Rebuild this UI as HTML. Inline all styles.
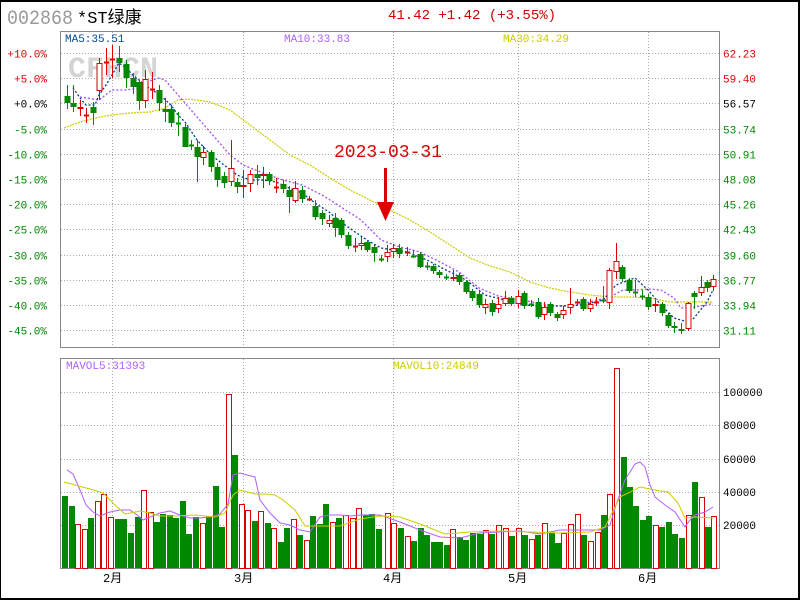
<!DOCTYPE html>
<html><head><meta charset="utf-8">
<style>
html,body{margin:0;padding:0;background:#fff}
#w{position:relative;width:800px;height:600px;box-sizing:border-box;border:2px solid #000;border-left-width:1px;overflow:hidden}
svg{position:absolute;left:-1px;top:-2px}
text{font-family:"Liberation Mono","Noto Sans CJK SC",monospace}
</style></head><body>
<div id="w"><svg id="s" width="800" height="600" xmlns="http://www.w3.org/2000/svg">
<text x="7" y="24" font-size="20" fill="#999" font-family="Liberation Sans,sans-serif" textLength="66" lengthAdjust="spacingAndGlyphs">002868</text>
<text x="77" y="23" font-size="17" fill="#000" font-family="Liberation Sans,Noto Sans CJK SC,sans-serif">*ST绿康</text>
<text x="388" y="19" font-size="14" fill="#d00000">41.42 +1.42 (+3.55%)</text>
<text x="68" y="77" font-size="30" font-weight="bold" fill="#d4d4d4" font-family="Liberation Sans,sans-serif">CFHCN</text>
</svg></div>
<script>
var s=document.getElementById('s'),h='';
var G='#008800',R='#dd0000';
function L(x1,y1,x2,y2,c,d,w){h+='<line x1="'+x1+'" y1="'+y1+'" x2="'+x2+'" y2="'+y2+'" stroke="'+c+'" stroke-width="'+(w||1)+'"'+(d?' stroke-dasharray="'+d+'"':'')+'/>';}
function T(x,y,t,c,sz,a){h+='<text x="'+x+'" y="'+y+'" font-size="'+(sz||11)+'" fill="'+c+'"'+(a?' text-anchor="'+a+'"':'')+'>'+t+'</text>';}
function P(pts,c,d,w){h+='<polyline fill="none" stroke="'+c+'" stroke-width="'+(w||1)+'"'+(d?' stroke-dasharray="'+d+'"':'')+' points="'+pts.map(function(p){return p.join(',')}).join(' ')+'"/>';}
var pl=['+10.0%','+5.0%','+0.0%','-5.0%','-10.0%','-15.0%','-20.0%','-25.0%','-30.0%','-35.0%','-40.0%','-45.0%'];
var pr=['62.23','59.40','56.57','53.74','50.91','48.08','45.26','42.43','39.60','36.77','33.94','31.11'];
for(var k=0;k<12;k++){var y=Math.round(53+25.2*k)+.5;L(61,y,719,y,'#aaa','1,2');var c=k<2?R:(k==2?'#000':G);T(47,y+4,pl[k],c,11,'end');T(723,y+4,pr[k],c,11);}
[112,243,393,518,648].forEach(function(x){L(x+.5,32,x+.5,347,'#aaa','1,2');L(x+.5,359,x+.5,568,'#aaa','1,2');});
[[392,'100000'],[425,'80000'],[459,'60000'],[492,'40000'],[525,'20000']].forEach(function(a){L(61,a[0]+.5,719,a[0]+.5,'#aaa','1,2');T(723,a[0]+4,a[1],'#000',11);});
h+='<rect x="60.5" y="31.5" width="659" height="316" fill="none" stroke="#888"/>';
h+='<rect x="60.5" y="358.5" width="659" height="210" fill="none" stroke="#888"/>';
var vol=[[64,G,496],[71,G,506],[77,R,524],[84,R,529],[90,G,518],[97,R,501],[103,R,494],[110,R,517],[117,G,519],[123,G,519],[130,G,533],[137,G,517],[143,R,490],[150,R,512],[156,G,522],[162,G,514],[169,G,515],[175,G,518],[182,G,501],[188,G,534],[195,G,517],[202,R,523],[208,G,516],[215,G,486],[221,G,527],[228,R,394],[234,G,455],[241,R,504],[247,R,510],[254,G,521],[260,R,511],[267,G,523],[273,R,528],[280,G,542],[286,G,528],[293,R,519],[299,G,535],[306,R,540],[312,G,516],[319,G,524],[325,G,504],[332,R,522],[338,G,518],[345,R,515],[352,R,518],[358,R,508],[365,G,515],[371,G,514],[378,G,529],[387,R,513],[393,R,523],[400,G,528],[407,R,536],[413,G,541],[420,G,528],[426,G,535],[433,G,542],[439,G,542],[446,G,545],[452,R,529],[459,G,537],[465,G,540],[472,G,533],[479,G,534],[485,R,530],[491,G,534],[498,R,525],[505,R,528],[511,G,536],[518,R,528],[524,G,535],[531,R,539],[537,G,535],[544,R,523],[551,G,533],[557,G,543],[563,R,533],[570,R,524],[577,R,514],[583,G,535],[590,R,541],[597,R,532],[603,G,515],[609,R,494],[616,R,368],[623,G,457],[629,G,487],[635,G,506],[642,G,520],[648,G,516],[655,R,525],[661,G,527],[668,G,522],[674,G,534],[681,G,538],[688,R,515],[694,G,482],[701,R,497],[707,G,527],[713,R,516]];
vol.forEach(function(v){if(v[1]==G)h+='<rect x="'+(v[0]-2)+'" y="'+v[2]+'" width="6" height="'+(568-v[2])+'" fill="'+G+'"/>';else h+='<rect x="'+(v[0]-1.5)+'" y="'+(v[2]+.5)+'" width="5" height="'+(568-v[2])+'" fill="#fff" stroke="'+R+'"/>';});
P([[67,470],[73,474],[80,490],[86,505],[93,512],[100,516],[110,512],[120,510],[130,510],[137,515],[143,520],[150,517],[160,513],[170,511],[180,515],[190,518],[200,518],[210,517],[220,514],[228,504],[233,475],[240,473],[247,475],[255,477],[260,500],[270,513],[280,523],[290,525],[300,530],[310,532],[320,517],[330,515],[340,515],[350,516],[360,515],[380,515],[400,522],[420,530],[440,537],[460,538],[480,533],[500,532],[520,531],[540,534],[560,530],[580,530],[600,530],[610,525],[616,505],[625,480],[635,464],[640,462],[645,467],[650,485],[655,497],[665,505],[675,512],[685,527],[690,520],[695,515],[705,512],[713,507]],'#b060ff');
P([[64,482],[75,485],[90,489],[103,493],[115,505],[125,514],[140,511],[150,513],[160,516],[175,516],[195,515],[215,517],[225,513],[233,495],[240,490],[255,494],[265,494],[275,495],[283,500],[295,510],[305,526],[320,526],[340,526],[360,519],[380,516],[400,517],[420,524],[445,534],[470,532],[500,531],[530,532],[560,533],[590,532],[605,527],[620,497],[640,487],[660,491],[668,492],[678,503],[685,518],[695,517],[713,518]],'#cccc00');
P([[64,128],[80,122],[100,117],[112,115],[130,113],[150,112],[165,108],[178,100],[190,99],[210,102],[230,110],[250,125],[270,140],[290,155],[310,165],[330,178],[350,190],[370,200],[390,210],[410,220],[430,232],[450,245],[470,258],[490,266],[510,272],[530,282],[550,288],[570,292],[590,295],[610,297],[630,297],[650,298],[670,302],[690,302],[713,302]],'#cccc00','2,1',1.2);
P([[80,97],[99,100],[112,90],[126,90],[139,88],[152,80],[159,78],[165,80],[178,95],[191,110],[204,125],[217,140],[230,155],[243,165],[263,173],[283,180],[302,185],[322,195],[341,207],[361,220],[381,240],[400,247],[420,252],[440,262],[459,272],[479,288],[498,296],[518,299],[537,303],[557,306],[577,305],[597,300],[610,297],[623,290],[636,290],[648,289],[661,290],[674,298],[681,308],[694,307],[707,305],[713,303]],'#a050f0','2,2',1.3);
P([[73,88],[80,98],[86,105],[95,105],[99,95],[106,85],[112,75],[119,63],[126,68],[133,75],[139,80],[145,85],[152,90],[160,95],[171,105],[178,115],[185,122],[197,140],[211,155],[224,165],[237,175],[250,180],[263,180],[276,182],[289,188],[302,193],[315,203],[329,212],[341,222],[355,232],[367,240],[381,248],[393,250],[407,252],[427,260],[446,270],[466,280],[485,295],[505,300],[524,305],[544,306],[563,306],[583,305],[603,300],[616,285],[629,280],[635,278],[648,290],[661,305],[674,318],[688,322],[694,318],[707,302],[713,290]],'#003c8c','2,2',1.3);
var cd=[[67,G,96,103,85,109],[73,G,103,107,85,112],[80,R,109,107,100,116],[86,R,115,115,108,123],[93,G,107,113,102,125],[99,R,91,63,58,100],[106,R,62,62,48,75],[112,R,59,59,45,78],[119,G,58,63,46,72],[126,G,64,78,60,88],[133,G,78,87,73,94],[139,G,82,101,80,110],[145,R,101,79,70,108],[152,R,89,89,72,99],[159,G,90,103,85,111],[165,G,109,112,98,122],[171,G,109,123,105,127],[178,G,123,123,112,136],[185,G,127,147,124,147],[191,G,145,145,140,150],[197,G,147,157,140,182],[203,R,158,152,146,165],[211,G,152,167,150,172],[217,G,167,180,163,187],[224,G,176,183,172,188],[231,R,182,168,140,186],[237,G,182,187,178,193],[243,R,187,185,170,198],[250,R,184,174,170,192],[257,G,174,178,165,185],[263,R,176,174,167,188],[269,G,174,181,172,185],[276,R,187,187,178,193],[283,G,184,189,180,193],[289,G,190,197,186,213],[295,R,201,188,181,203],[302,G,190,199,186,203],[309,R,199,199,196,201],[315,G,206,217,200,220],[322,G,213,219,210,225],[329,R,224,220,215,227],[335,G,218,228,213,237],[341,G,220,235,218,238],[348,G,235,246,232,249],[355,R,246,246,238,252],[361,R,246,243,237,250],[367,G,242,250,240,252],[374,G,247,253,245,262],[381,G,259,259,255,262],[387,R,257,252,245,262],[393,R,252,248,244,258],[399,G,248,254,244,258],[407,R,252,252,247,256],[413,G,256,256,250,258],[420,G,254,267,252,268],[427,G,266,266,262,270],[433,G,266,271,264,274],[439,G,272,275,270,278],[446,G,277,277,274,280],[453,R,279,277,270,281],[459,G,275,282,273,285],[466,G,282,292,280,294],[472,G,291,298,289,301],[479,G,294,305,291,308],[485,R,308,304,299,314],[492,G,303,312,300,316],[498,R,309,304,297,313],[505,R,304,298,291,306],[511,G,298,304,296,306],[518,R,304,296,290,308],[524,G,293,306,291,309],[531,G,304,304,300,307],[538,G,302,317,298,319],[544,R,315,307,302,320],[550,G,304,313,302,316],[557,G,314,318,312,321],[563,R,315,310,306,319],[570,R,308,304,288,314],[577,R,302,302,299,305],[583,G,299,309,297,311],[590,R,309,304,299,312],[596,R,303,302,297,306],[603,G,300,300,286,303],[609,R,303,270,268,309],[616,R,272,261,243,279],[622,G,267,279,265,282],[629,G,280,291,278,293],[635,G,292,293,280,297],[642,G,296,296,290,300],[648,G,297,307,294,310],[655,R,306,304,300,312],[662,G,304,313,302,316],[668,G,315,326,313,328],[674,G,326,328,322,333],[681,G,329,331,323,334],[688,R,329,303,302,331],[694,G,293,297,291,309],[701,R,293,287,276,296],[707,G,282,288,280,292],[713,R,287,279,275,291]];
cd.forEach(function(c){var x=c[0],t=Math.min(c[2],c[3]),b=Math.max(c[2],c[3]);L(x+.5,c[4],x+.5,c[5],c[1]);
 if(b-t<2){L(x-2,t+.5,x+3,t+.5,c[1],0,2);}
 else if(c[1]==G)h+='<rect x="'+(x-2.5)+'" y="'+t+'" width="6" height="'+(b-t)+'" fill="'+G+'"/>';
 else h+='<rect x="'+(x-2)+'" y="'+(t+.5)+'" width="5" height="'+(b-t-1)+'" fill="#fff" stroke="'+R+'"/>';});
T(65,42,'MA5:35.51','#004a99',11);T(284,42,'MA10:33.83','#b060ff',11);T(503,42,'MA30:34.29','#cccc00',11);
T(66,369,'MAVOL5:31393','#b060ff',11);T(393,369,'MAVOL10:24849','#cccc00',11);
T(334,157,'2023-03-31',R,18);
L(385.5,168,385.5,208,R,0,3);h+='<polygon points="377,202 394,202 385.5,221" fill="'+R+'"/>';
[[103,'2月'],[234,'3月'],[383,'4月'],[508,'5月'],[638,'6月']].forEach(function(m){h+='<text x="'+m[0]+'" y="582" font-size="12" fill="#000" font-family="Liberation Sans,Noto Sans CJK SC,sans-serif">'+m[1]+'</text>';});
s.insertAdjacentHTML('beforeend',h);
</script>
</body></html>
